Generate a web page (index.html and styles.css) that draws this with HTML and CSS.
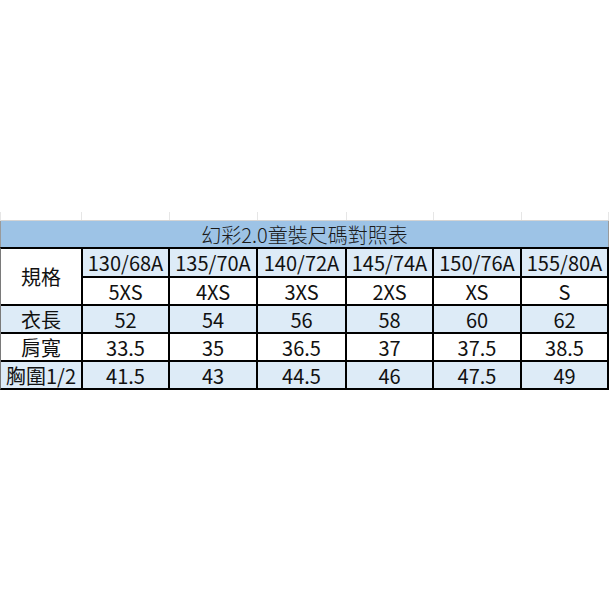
FILE: index.html
```html
<!DOCTYPE html>
<html lang="zh-Hant">
<head>
<meta charset="utf-8">
<title>幻彩2.0童裝尺碼對照表</title>
<link rel="stylesheet" href="styles.css">
</head>
<body>
<div class="sheet">
  <div class="gridtop">
    <div class="g g0"></div>
    <div class="g g1"></div>
    <div class="g g2"></div>
    <div class="g g3"></div>
    <div class="g g4"></div>
    <div class="g g5"></div>
    <div class="g g6"></div>
  </div>
  <div class="title">幻彩2.0童裝尺碼對照表</div>
  <div class="table">
    <div class="c w spec">規格</div>
    <div class="c b">130/68A</div>
    <div class="c b">135/70A</div>
    <div class="c b">140/72A</div>
    <div class="c b">145/74A</div>
    <div class="c b">150/76A</div>
    <div class="c b">155/80A</div>

    <div class="c w">5XS</div>
    <div class="c w">4XS</div>
    <div class="c w">3XS</div>
    <div class="c w">2XS</div>
    <div class="c w">XS</div>
    <div class="c w">S</div>

    <div class="c b">衣長</div>
    <div class="c b">52</div>
    <div class="c b">54</div>
    <div class="c b">56</div>
    <div class="c b">58</div>
    <div class="c b">60</div>
    <div class="c b">62</div>

    <div class="c w">肩寬</div>
    <div class="c w">33.5</div>
    <div class="c w">35</div>
    <div class="c w">36.5</div>
    <div class="c w">37</div>
    <div class="c w">37.5</div>
    <div class="c w">38.5</div>

    <div class="c b">胸圍1/2</div>
    <div class="c b">41.5</div>
    <div class="c b">43</div>
    <div class="c b">44.5</div>
    <div class="c b">46</div>
    <div class="c b">47.5</div>
    <div class="c b">49</div>
  </div>
</div>
</body>
</html>
```

FILE: styles.css
```css
html, body {
  margin: 0;
  padding: 0;
  background: #ffffff;
}

body {
  font-family: "Noto Sans CJK TC", "Noto Sans", sans-serif;
  color: #111111;
}

.sheet {
  width: 610px;
  padding-top: 212px;
}

.gridtop {
  display: flex;
  height: 9px;
  box-sizing: border-box;
  border-bottom: 1px solid #d4d4d4;
  border-left: 1px solid #e6e6e6;
  width: 609px;
}

.g {
  box-sizing: border-box;
  border-right: 1px solid #e6e6e6;
}
.g0 { width: 81px; }
.g1 { width: 88px; }
.g2 { width: 88px; }
.g3 { width: 89px; }
.g4 { width: 87px; }
.g5 { width: 88px; }
.g6 { width: 87px; }

.title {
  box-sizing: border-box;
  width: 609px;
  height: 26px;
  background: #9dc3e6;
  border-left: 1px solid #9a9a9a;
  border-right: 1px solid #9a9a9a;
  display: flex;
  justify-content: center;
  align-items: flex-end;
  font-size: 20px;
  font-weight: 300;
  line-height: 24px;
  color: #1a1a1a;
}

.table {
  box-sizing: border-box;
  width: 609px;
  display: grid;
  grid-template-columns: 80px 85px 86px 87px 85px 86px 85px;
  grid-template-rows: 27px 26px 26px 26px 26px;
  gap: 2px;
  background: #000000;
  border-top: 2px solid #000000;
  border-right: 2px solid #000000;
  border-bottom: 2px solid #000000;
  border-left: 1px solid #7a7a7a;
}

.c {
  display: flex;
  align-items: center;
  justify-content: center;
  font-size: 20px;
  line-height: 1;
  padding-top: 1px;
  box-sizing: border-box;
}

.b { background: #ddebf7; }
.w { background: #ffffff; }

.spec {
  grid-row: span 2;
}
```
